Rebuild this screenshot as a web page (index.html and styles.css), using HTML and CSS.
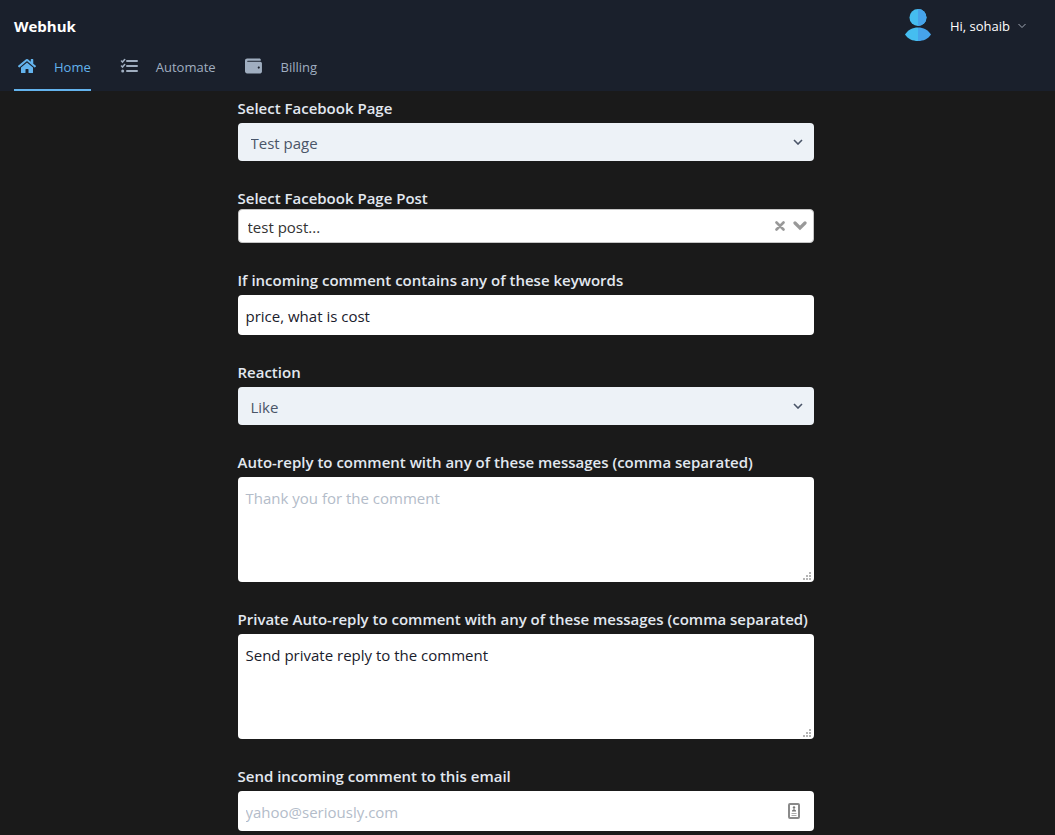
FILE: index.html
```html
<!DOCTYPE html>
<html lang="en">

<head>
    <meta charset="UTF-8">
    <meta name="viewport" content="width=device-width, initial-scale=1.0">
    <title>Webhuk</title>
    <link rel="stylesheet" href="styles.css">
</head>

<body>
    <header class="header">
        <div class="topbar">
            <a class="brand" href="#">Webhuk</a>
            <button class="user" type="button">
                <svg class="avatar" viewBox="0 0 26 32">
                    <circle cx="13" cy="8.5" r="8.5" fill="#45bdf0" />
                    <path d="M13 0a8.500 8.500 0 0 1 0 17z" fill="#46a3ea" />
                    <path d="M0 25.500C3 21 7.500 18.500 13 18.500V32C7.500 32 3 30 0 25.500z" fill="#45bdf0" />
                    <path d="M26 25.500C23 21 18.500 18.500 13 18.500V32C18.500 32 23 30 26 25.500z" fill="#46a3ea" />
                </svg>
                <span>Hi, sohaib</span>
                <svg class="caret" viewBox="0 0 8 6">
                    <path d="M.5 1l3.500 3.500L7.500 1" />
                </svg>
            </button>
        </div>
        <nav class="nav">
            <a class="nav-link active" href="#">
                <svg class="nav-icon" viewBox="0 0 576 512">
                    <path d="M280.370 148.260L96 300.110V464a16 16 0 0 0 16 16l112.060-.290a16 16 0 0 0 15.920-16V368a16 16 0 0 1 16-16h64a16 16 0 0 1 16 16v95.640a16 16 0 0 0 16 16.050L464 480a16 16 0 0 0 16-16V300L295.670 148.260a12.190 12.190 0 0 0-15.300 0zM571.600 251.470L488 182.560V44.050a12 12 0 0 0-12-12h-56a12 12 0 0 0-12 12v72.610L318.470 43a48 48 0 0 0-61 0L4.340 251.470a12 12 0 0 0-1.600 16.900l25.500 31A12 12 0 0 0 45.150 301l235.220-193.740a12.190 12.190 0 0 1 15.300 0L530.900 301a12 12 0 0 0 16.900-1.600l25.500-31a12 12 0 0 0-1.700-16.930z" />
                </svg>
                <span>Home</span>
            </a>
            <a class="nav-link" href="#">
                <svg class="nav-icon" viewBox="0 0 18 16">
                    <path d="M7 3h10M7 8h10M7 13h10" fill="none" stroke="currentColor" stroke-width="2" stroke-linecap="round" />
                    <path d="M1.500 3l1 1L4.700 1.500M1.500 8l1 1L4.700 6.500" fill="none" stroke="currentColor" stroke-width="1.600" stroke-linecap="round" />
                    <circle cx="2.700" cy="13" r="1.500" />
                </svg>
                <span>Automate</span>
            </a>
            <a class="nav-link" href="#">
                <svg class="nav-icon" viewBox="0 16 544 480">
                    <path d="M461.200 128H80c-8.840 0-16-7.160-16-16s7.160-16 16-16h384c8.840 0 16-7.160 16-16 0-26.510-21.490-48-48-48H64C28.650 32 0 60.650 0 96v320c0 35.350 28.650 64 64 64h397.200c28.020 0 50.800-21.530 50.800-48V176c0-26.470-22.780-48-50.800-48zM416 336c-17.670 0-32-14.330-32-32s14.330-32 32-32 32 14.330 32 32-14.330 32-32 32z" />
                </svg>
                <span>Billing</span>
            </a>
        </nav>
    </header>

    <main class="main">
        <form class="form">
            <div class="field">
                <label for="page">Select Facebook Page</label>
                <div class="select-wrap">
                    <select id="page" class="control select">
                        <option>Test page</option>
                    </select>
                    <svg class="chevron" viewBox="0 0 10 6">
                        <path d="M1 1l4 4 4-4" />
                    </svg>
                </div>
            </div>
            <div class="field joined">
                <label for="post">Select Facebook Page Post</label>
                <div class="combo">
                    <input id="post" class="combo-input" type="text" value="test post...">
                    <button class="combo-btn" type="button" aria-label="Clear">
                        <svg class="icon-clear" viewBox="0 0 10 10">
                            <path d="M1.500 1.500l7 7M8.500 1.500l-7 7" stroke-width="2.600" />
                        </svg>
                    </button>
                    <button class="combo-btn" type="button" aria-label="Open">
                        <svg class="icon-open" viewBox="0 0 14 10">
                            <path d="M2 2l5 5 5-5" stroke-width="3.200" />
                        </svg>
                    </button>
                </div>
            </div>
            <div class="field">
                <label for="keywords">If incoming comment contains any of these keywords</label>
                <input id="keywords" class="control" type="text" value="price, what is cost">
            </div>
            <div class="field">
                <label for="reaction">Reaction</label>
                <div class="select-wrap">
                    <select id="reaction" class="control select">
                        <option>Like</option>
                    </select>
                    <svg class="chevron" viewBox="0 0 10 6">
                        <path d="M1 1l4 4 4-4" />
                    </svg>
                </div>
            </div>
            <div class="field">
                <label for="reply">Auto-reply to comment with any of these messages (comma separated)</label>
                <textarea id="reply" class="control" placeholder="Thank you for the comment"></textarea>
            </div>
            <div class="field">
                <label for="private-reply">Private Auto-reply to comment with any of these messages (comma separated)</label>
                <textarea id="private-reply" class="control">Send private reply to the comment</textarea>
            </div>
            <div class="field">
                <label for="email">Send incoming comment to this email</label>
                <div class="select-wrap">
                    <input id="email" class="control" type="email" placeholder="yahoo@seriously.com">
                    <svg class="autofill" viewBox="0 0 12 16">
                        <rect x="1" y="1" width="10" height="14" rx="1" fill="none" stroke="#8a8a8a" stroke-width="2" />
                        <circle cx="6" cy="4.500" r="1.200" fill="#777" />
                        <path d="M4 8.500V7.500L6 6l2 1.500v1z" fill="#777" />
                        <path d="M3.500 10.500h5M3.500 12.500h5" stroke="#aaa" />
                    </svg>
                </div>
            </div>
        </form>
    </main>
</body>

</html>
```

FILE: styles.css
```css
* {
    box-sizing: border-box;
}

body {
    margin: 0;
    background-color: #1a1a1a;
    color: #e2e8f0;
    font-family: "Open Sans", "Noto Sans", sans-serif;
    font-size: 15px;
    line-height: 24px;
}

button,
input,
select,
textarea {
    font: inherit;
}

button {
    padding: 0;
    border: 0;
    background: none;
    cursor: pointer;
}

a {
    text-decoration: none;
}

svg {
    display: block;
    fill: currentColor;
}

/* header */

.header {
    background-color: #1a202c;
}

.topbar {
    display: flex;
    justify-content: space-between;
    align-items: center;
    height: 50px;
    padding: 2px 29px 0 14px;
}

.brand {
    color: #fff;
    font-weight: 700;
}

.user {
    display: flex;
    align-items: center;
    color: #fff;
    font-size: 13px;
}

.avatar {
    width: 26px;
    height: 32px;
    margin: 0 19px 2px 0;
}

.caret {
    width: 8px;
    height: 6px;
    margin-left: 8px;
}

.caret path {
    fill: none;
    stroke: #a0a7b3;
}

.nav {
    display: flex;
    gap: 25px;
    padding: 0 14px;
}

.nav-link {
    display: flex;
    align-items: center;
    gap: 18px;
    height: 41px;
    padding: 0 0 5px 4px;
    border-bottom: 2px solid transparent;
    color: #a0aec0;
    font-size: 13px;
}

.nav-link.active {
    border-color: #63b3ed;
    color: #63b3ed;
}

.nav-icon {
    width: 18px;
    height: 16px;
    margin-bottom: 2px;
}

/* form */

.main {
    padding: 6px 4px 4px 0;
}

.form {
    max-width: 576px;
    margin: 0 auto;
}

.field {
    display: flex;
    flex-direction: column;
    gap: 4px;
    margin-bottom: 26px;
}

.field:last-child {
    margin-bottom: 0;
}

.field.joined {
    gap: 0;
}

label {
    font-weight: 600;
    line-height: 22px;
}

.control {
    display: block;
    width: 100%;
    height: 40px;
    padding: 9px 8px 7px;
    border: 0;
    border-radius: 4px;
    background-color: #fff;
    color: #1a202c;
}

.control::placeholder {
    color: #b3bcc9;
}

textarea.control {
    height: 105px;
    resize: vertical;
}

textarea::-webkit-resizer {
    background: url("data:image/svg+xml,%3Csvg xmlns='http://www.w3.org/2000/svg' width='15' height='15'%3E%3Cpath fill='%23b5b5b5' d='M10 5h2v2h-2zM7 8h2v2H7zM10 8h2v2h-2zM4 11h2v2H4zM7 11h2v2H7zM10 11h2v2h-2z'/%3E%3C/svg%3E") no-repeat right bottom;
}

.select-wrap {
    position: relative;
}

.select {
    height: 38px;
    padding: 2px 32px 0 13px;
    appearance: none;
    background-color: #edf2f7;
    color: #4a5568;
}

.chevron {
    position: absolute;
    top: 16px;
    right: 11px;
    width: 10px;
    height: 6px;
    pointer-events: none;
}

.chevron path {
    fill: none;
    stroke: #4a5568;
    stroke-width: 1.6;
}

.autofill {
    position: absolute;
    top: 12px;
    right: 14px;
    width: 12px;
    height: 16px;
}

.combo {
    display: flex;
    align-items: center;
    gap: 8px;
    height: 34px;
    padding: 0 6px 0 9px;
    border: 1px solid #c5c5c5;
    border-radius: 4px;
    background-color: #fff;
}

.combo-input {
    flex: 1;
    min-width: 0;
    padding: 2px 0 0;
    border: 0;
    outline: 0;
    background: none;
    color: #333;
}

.combo-btn path {
    fill: none;
    stroke: #999;
    stroke-linecap: round;
}

.icon-clear {
    width: 10px;
    height: 10px;
}

.icon-open {
    width: 14px;
    height: 10px;
}
```
